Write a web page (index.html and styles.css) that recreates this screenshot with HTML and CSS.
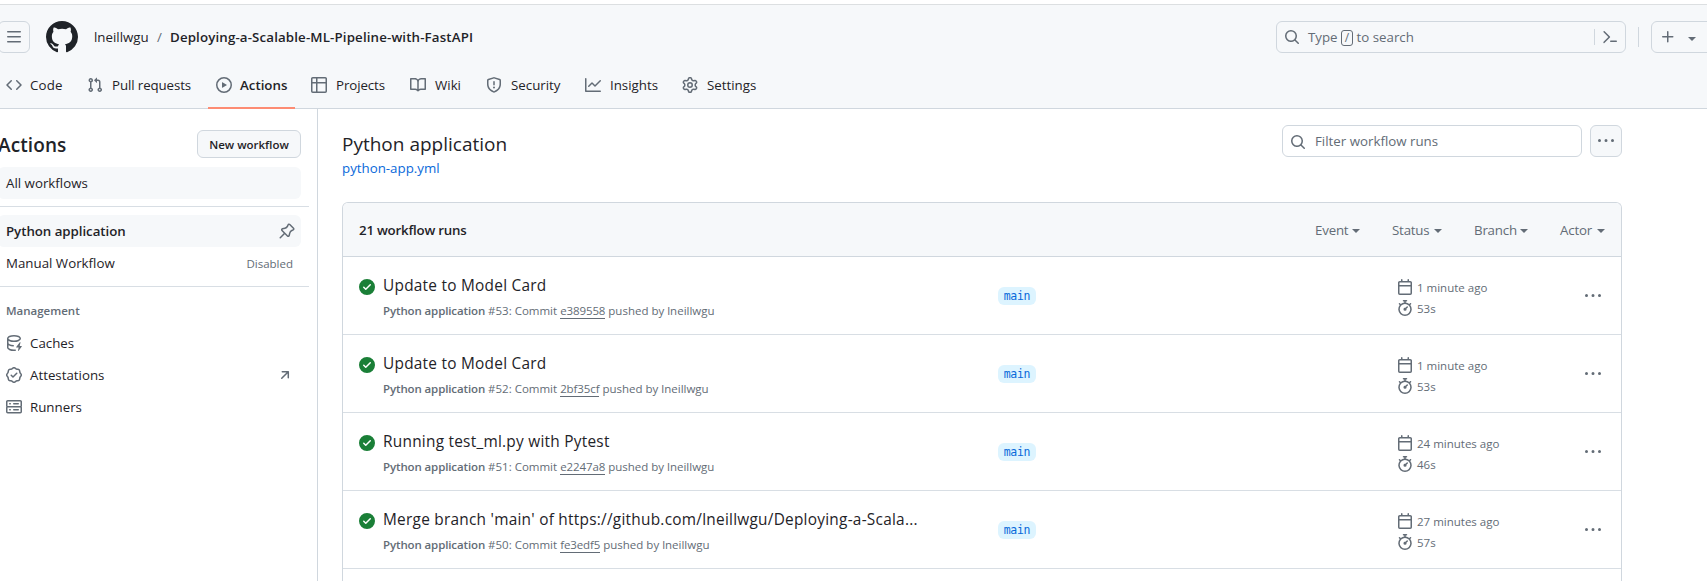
FILE: index.html
```html
<!DOCTYPE html>
<html lang="en">
<head>
<meta charset="utf-8">
<title>Workflow runs</title>
<link rel="stylesheet" href="styles.css">
</head>
<body>
<svg class="sprite" width="0" height="0">
  <symbol id="i-check" viewBox="0 0 16 16"><path d="M8 16A8 8 0 1 1 8 0a8 8 0 0 1 0 16Zm3.78-9.72a.751.751 0 0 0-.018-1.042.751.751 0 0 0-1.042-.018L6.75 9.19 5.28 7.72a.751.751 0 0 0-1.042.018.751.751 0 0 0-.018 1.042l2 2a.75.75 0 0 0 1.06 0Z"/></symbol>
  <symbol id="i-dots" viewBox="0 0 16 16"><path d="M8 9a1.5 1.5 0 1 0 0-3 1.5 1.5 0 0 0 0 3ZM1.5 9a1.5 1.5 0 1 0 0-3 1.5 1.5 0 0 0 0 3Zm13 0a1.5 1.5 0 1 0 0-3 1.5 1.5 0 0 0 0 3Z"/></symbol>
  <symbol id="i-search" viewBox="0 0 16 16"><path d="M10.68 11.74a6 6 0 0 1-7.922-8.982 6 6 0 0 1 8.982 7.922l3.04 3.04a.749.749 0 0 1-.326 1.275.749.749 0 0 1-.734-.215ZM11.5 7a4.499 4.499 0 1 0-8.997 0A4.499 4.499 0 0 0 11.5 7Z"/></symbol>
  <symbol id="i-cal" viewBox="0 0 16 16"><path d="M4.75 0a.75.75 0 0 1 .75.75V2h5V.75a.75.75 0 0 1 1.5 0V2h1.25c.966 0 1.75.784 1.75 1.75v10.5A1.75 1.75 0 0 1 13.25 16H2.75A1.75 1.75 0 0 1 1 14.25V3.75C1 2.784 1.784 2 2.75 2H4V.75A.75.75 0 0 1 4.75 0ZM2.5 7.5v6.75c0 .138.112.25.25.25h10.5a.25.25 0 0 0 .25-.25V7.5Zm10.75-4H2.75a.25.25 0 0 0-.25.25V6h11V3.75a.25.25 0 0 0-.25-.25Z"/></symbol>
  <symbol id="i-watch" viewBox="0 0 16 16"><path d="M5.75.75A.75.75 0 0 1 6.5 0h3a.75.75 0 0 1 0 1.5h-.75v1l-.001.041a6.724 6.724 0 0 1 3.464 1.435l.007-.006.75-.75a.749.749 0 0 1 1.275.326.749.749 0 0 1-.215.734l-.75.75-.006.007a6.75 6.75 0 1 1-10.548 0L2.72 5.03l-.75-.75a.751.751 0 0 1 .018-1.042.751.751 0 0 1 1.042-.018l.75.75.007.006A6.72 6.72 0 0 1 7.25 2.541V1.5H6.5a.75.75 0 0 1-.75-.75ZM8 14.5a5.25 5.25 0 1 0-.001-10.501A5.25 5.25 0 0 0 8 14.5Zm.389-6.7 1.33-1.33a.75.75 0 1 1 1.061 1.06L9.45 8.861A1.503 1.503 0 0 1 8 10.75a1.499 1.499 0 1 1 .389-2.95Z"/></symbol>
</svg>

<div class="topline"></div>
<header class="header">
  <div class="bar">
    <div class="menu"><svg class="ic" viewBox="0 0 16 16"><path d="M1 2.75A.75.75 0 0 1 1.75 2h12.5a.75.75 0 0 1 0 1.5H1.75A.75.75 0 0 1 1 2.75Zm0 5A.75.75 0 0 1 1.75 7h12.5a.75.75 0 0 1 0 1.5H1.75A.75.75 0 0 1 1 7.75ZM1.75 12h12.5a.75.75 0 0 1 0 1.5H1.75a.75.75 0 0 1 0-1.5Z"/></svg></div>
    <svg class="logo" viewBox="0 0 16 16"><path d="M8 0c4.42 0 8 3.58 8 8a8.013 8.013 0 0 1-5.45 7.59c-.4.08-.55-.17-.55-.38 0-.27.01-1.13.01-2.2 0-.75-.25-1.23-.54-1.48 1.78-.2 3.65-.88 3.65-3.95 0-.88-.31-1.59-.82-2.15.08-.2.36-1.02-.08-2.12 0 0-.67-.22-2.2.82-.64-.18-1.32-.27-2-.27-.68 0-1.36.09-2 .27-1.53-1.03-2.2-.82-2.2-.82-.44 1.1-.16 1.92-.08 2.12-.51.56-.82 1.28-.82 2.15 0 3.06 1.86 3.75 3.64 3.95-.23.2-.44.55-.51 1.07-.46.21-1.61.55-2.33-.66-.15-.24-.6-.83-1.23-.82-.67.01-.27.38.01.53.34.19.73.9.82 1.13.16.45.68 1.31 2.69.94 0 .67.01 1.3.01 1.49 0 .21-.15.45-.55.38A7.995 7.995 0 0 1 0 8c0-4.42 3.58-8 8-8Z"/></svg>
    <span class="owner">lneillwgu</span><span class="slash">/</span><span class="repo">Deploying-a-Scalable-ML-Pipeline-with-FastAPI</span>
    <div class="search">
      <svg class="ic"><use href="#i-search"/></svg>
      <span class="search-text">Type <kbd>/</kbd> to search</span>
      <span class="search-sep"></span>
      <svg class="ic term" viewBox="0 0 16 16"><path d="m6.354 8.04-4.773 4.773a.75.75 0 1 0 1.061 1.06L7.945 8.57a.75.75 0 0 0 0-1.06L2.642 2.206a.75.75 0 0 0-1.06 1.061L6.353 8.04ZM8.75 11.5a.75.75 0 0 0 0 1.5h5.5a.75.75 0 0 0 0-1.5h-5.5Z"/></svg>
    </div>
    <span class="divider"></span>
    <div class="create"><svg class="ic" viewBox="0 0 16 16"><path d="M7.75 2a.75.75 0 0 1 .75.75V7h4.25a.75.75 0 0 1 0 1.5H8.5v4.25a.75.75 0 0 1-1.5 0V8.5H2.75a.75.75 0 0 1 0-1.5H7V2.75A.75.75 0 0 1 7.75 2Z"/></svg><i class="caret"></i></div>
  </div>
  <nav class="tabs">
    <a class="tab t1"><svg class="ic" viewBox="0 0 16 16"><path d="m11.28 3.22 4.25 4.25a.75.75 0 0 1 0 1.06l-4.25 4.25a.749.749 0 0 1-1.275-.326.749.749 0 0 1 .215-.734L13.94 8l-3.72-3.72a.749.749 0 0 1 .326-1.275.749.749 0 0 1 .734.215Zm-6.56 0a.751.751 0 0 1 1.042.018.751.751 0 0 1 .018 1.042L2.06 8l3.72 3.72a.749.749 0 0 1-.326 1.275.749.749 0 0 1-.734-.215L.47 8.53a.75.75 0 0 1 0-1.06Z"/></svg><span>Code</span></a>
    <a class="tab t2"><svg class="ic" viewBox="0 0 16 16"><path d="M1.5 3.25a2.25 2.25 0 1 1 3 2.122v5.256a2.251 2.251 0 1 1-1.5 0V5.372A2.25 2.25 0 0 1 1.5 3.25Zm5.677-.177L9.573.677A.25.25 0 0 1 10 .854V2.5h1A2.5 2.5 0 0 1 13.5 5v5.628a2.251 2.251 0 1 1-1.5 0V5a1 1 0 0 0-1-1h-1v1.646a.25.25 0 0 1-.427.177L7.177 3.427a.25.25 0 0 1 0-.354ZM3.75 2.5a.75.75 0 1 0 0 1.5.75.75 0 0 0 0-1.5Zm0 9.5a.75.75 0 1 0 0 1.5.75.75 0 0 0 0-1.5Zm8.25.75a.75.75 0 1 0 1.5 0 .75.75 0 0 0-1.5 0Z"/></svg><span>Pull requests</span></a>
    <a class="tab t3 active"><svg class="ic" viewBox="0 0 16 16"><path d="M8 0a8 8 0 1 1 0 16A8 8 0 0 1 8 0ZM1.5 8a6.5 6.5 0 1 0 13 0 6.5 6.5 0 0 0-13 0Zm4.879-2.773 4.264 2.559a.25.25 0 0 1 0 .428l-4.264 2.559A.25.25 0 0 1 6 10.559V5.442a.25.25 0 0 1 .379-.215Z"/></svg><span>Actions</span></a>
    <a class="tab t4"><svg class="ic" viewBox="0 0 16 16"><path d="M0 1.75C0 .784.784 0 1.75 0h12.5C15.216 0 16 .784 16 1.75v12.5A1.75 1.75 0 0 1 14.25 16H1.75A1.75 1.75 0 0 1 0 14.25ZM6.5 6.5v8h7.75a.25.25 0 0 0 .25-.25V6.5Zm8-1.5V1.75a.25.25 0 0 0-.25-.25H6.5V5Zm-13 1.5v7.75c0 .138.112.25.25.25H5v-8ZM5 5V1.5H1.75a.25.25 0 0 0-.25.25V5Z"/></svg><span>Projects</span></a>
    <a class="tab t5"><svg class="ic" viewBox="0 0 16 16"><path d="M0 1.75A.75.75 0 0 1 .75 1h4.253c1.227 0 2.317.59 3 1.501A3.743 3.743 0 0 1 11.006 1h4.245a.75.75 0 0 1 .75.75v10.5a.75.75 0 0 1-.75.75h-4.507a2.25 2.25 0 0 0-1.591.659l-.622.621a.75.75 0 0 1-1.06 0l-.622-.621A2.25 2.25 0 0 0 5.258 13H.75a.75.75 0 0 1-.75-.75Zm7.251 10.324.004-5.073-.002-2.253A2.25 2.25 0 0 0 5.003 2.5H1.5v9h3.757a3.75 3.75 0 0 1 1.994.574ZM8.755 4.75l-.004 7.322a3.752 3.752 0 0 1 1.992-.572H14.5v-9h-3.495a2.25 2.25 0 0 0-2.25 2.25Z"/></svg><span>Wiki</span></a>
    <a class="tab t6"><svg class="ic" viewBox="0 0 16 16"><path d="M7.467.133a1.748 1.748 0 0 1 1.066 0l5.25 1.68A1.75 1.75 0 0 1 15 3.48V7c0 1.566-.32 3.182-1.303 4.682-.983 1.498-2.585 2.813-5.032 3.855a1.697 1.697 0 0 1-1.33 0c-2.447-1.042-4.049-2.357-5.032-3.855C1.32 10.182 1 8.566 1 7V3.48a1.75 1.75 0 0 1 1.217-1.667Zm.61 1.429a.25.25 0 0 0-.153 0l-5.25 1.68a.25.25 0 0 0-.174.238V7c0 1.358.275 2.666 1.057 3.86.784 1.194 2.121 2.34 4.366 3.297a.196.196 0 0 0 .154 0c2.245-.956 3.582-2.104 4.366-3.298C13.225 9.666 13.5 8.36 13.5 7V3.48a.251.251 0 0 0-.174-.237l-5.25-1.68ZM8.75 4.75v3a.75.75 0 0 1-1.5 0v-3a.75.75 0 0 1 1.5 0ZM9 10.5a1 1 0 1 1-2 0 1 1 0 0 1 2 0Z"/></svg><span>Security</span></a>
    <a class="tab t7"><svg class="ic" viewBox="0 0 16 16"><path d="M1.5 1.75V13.5h13.75a.75.75 0 0 1 0 1.5H.75a.75.75 0 0 1-.75-.75V1.75a.75.75 0 0 1 1.5 0Zm14.28 2.53-5.25 5.25a.75.75 0 0 1-1.06 0L7 7.06 4.28 9.78a.751.751 0 0 1-1.042-.018.751.751 0 0 1-.018-1.042l3.25-3.25a.75.75 0 0 1 1.06 0L10 7.94l4.72-4.72a.751.751 0 0 1 1.042.018.751.751 0 0 1 .018 1.042Z"/></svg><span>Insights</span></a>
    <a class="tab t8"><svg class="ic" viewBox="0 0 16 16"><path d="M8 0a8.2 8.2 0 0 1 .701.031C9.444.095 9.99.645 10.16 1.29l.288 1.107c.018.066.079.158.212.224.231.114.454.243.668.386.123.082.233.09.299.071l1.103-.303c.644-.176 1.392.021 1.82.63.27.385.506.792.704 1.218.315.675.111 1.422-.364 1.891l-.814.806c-.049.048-.098.147-.088.294.016.257.016.515 0 .772-.01.147.038.246.088.294l.814.806c.475.469.679 1.216.364 1.891a7.977 7.977 0 0 1-.704 1.217c-.428.61-1.176.807-1.82.63l-1.102-.302c-.067-.019-.177-.011-.3.071a5.909 5.909 0 0 1-.668.386c-.133.066-.194.158-.211.224l-.29 1.106c-.168.646-.715 1.196-1.458 1.26a8.006 8.006 0 0 1-1.402 0c-.743-.064-1.289-.614-1.458-1.26l-.289-1.106c-.018-.066-.079-.158-.212-.224a5.738 5.738 0 0 1-.668-.386c-.123-.082-.233-.09-.299-.071l-1.103.303c-.644.176-1.392-.021-1.82-.63a8.12 8.12 0 0 1-.704-1.218c-.315-.675-.111-1.422.363-1.891l.815-.806c.05-.048.098-.147.088-.294a6.214 6.214 0 0 1 0-.772c.01-.147-.038-.246-.088-.294l-.815-.806C.635 6.045.431 5.298.746 4.623a7.92 7.92 0 0 1 .704-1.217c.428-.61 1.176-.807 1.82-.63l1.102.302c.067.019.177.011.3-.071.214-.143.437-.272.668-.386.133-.066.194-.158.211-.224l.29-1.106C6.009.645 6.556.095 7.299.03 7.53.01 7.764 0 8 0Zm-.571 1.525c-.036.003-.108.036-.137.146l-.289 1.105c-.147.561-.549.967-.998 1.189-.173.086-.34.183-.5.29-.417.278-.97.423-1.529.27l-1.103-.303c-.109-.03-.175.016-.195.045-.22.312-.412.644-.573.99-.014.031-.021.11.059.19l.815.806c.411.406.562.957.53 1.456a4.709 4.709 0 0 0 0 .582c.032.499-.119 1.05-.53 1.456l-.815.806c-.081.08-.073.159-.059.19.162.346.353.677.573.989.02.03.085.076.195.046l1.102-.303c.56-.153 1.113-.008 1.53.27.161.107.328.204.501.29.447.222.85.629.997 1.189l.289 1.105c.029.109.101.143.137.146a6.6 6.6 0 0 0 1.142 0c.036-.003.108-.036.137-.146l.289-1.105c.147-.561.549-.967.998-1.189.173-.086.34-.183.5-.29.417-.278.97-.423 1.529-.27l1.103.303c.109.029.175-.016.195-.045.22-.313.411-.644.573-.99.014-.031.021-.11-.059-.19l-.815-.806c-.411-.406-.562-.957-.53-1.456a4.709 4.709 0 0 0 0-.582c-.032-.499.119-1.05.53-1.456l.815-.806c.081-.08.073-.159.059-.19a6.464 6.464 0 0 0-.573-.989c-.02-.03-.085-.076-.195-.046l-1.102.303c-.56.153-1.113.008-1.53-.27a4.44 4.44 0 0 0-.501-.29c-.447-.222-.85-.629-.997-1.189l-.289-1.105c-.029-.11-.101-.143-.137-.146a6.6 6.6 0 0 0-1.142 0ZM11 8a3 3 0 1 1-6 0 3 3 0 0 1 6 0ZM9.5 8a1.5 1.5 0 1 0-3.001.001A1.5 1.5 0 0 0 9.5 8Z"/></svg><span>Settings</span></a>
  </nav>
</header>

<div class="page">
  <aside class="side">
    <div class="side-head"><h2>Actions</h2><a class="new">New workflow</a></div>
    <a class="item shaded"><span>All workflows</span></a>
    <hr class="rule r1">
    <a class="item shaded strong"><span>Python application</span><svg class="ic end pin" viewBox="0 0 16 16"><path d="m11.294.984 3.722 3.722a1.75 1.75 0 0 1-.504 2.826l-1.327.613a3.089 3.089 0 0 0-1.707 2.084l-.584 2.454c-.317 1.332-1.972 1.8-2.94.832L5.75 11.311 1.78 15.28a.749.749 0 1 1-1.06-1.06l3.969-3.97-2.204-2.204c-.968-.968-.5-2.623.832-2.94l2.454-.584a3.08 3.08 0 0 0 2.084-1.707l.613-1.327a1.75 1.75 0 0 1 2.826-.504ZM6.283 9.723l2.732 2.731a.25.25 0 0 0 .42-.119l.584-2.454a4.586 4.586 0 0 1 2.537-3.098l1.328-.613a.25.25 0 0 0 .072-.404l-3.722-3.722a.25.25 0 0 0-.404.072l-.613 1.328a4.584 4.584 0 0 1-3.098 2.537l-2.454.584a.25.25 0 0 0-.119.42l2.731 2.732Z"/></svg></a>
    <a class="item"><span>Manual Workflow</span><small class="end">Disabled</small></a>
    <hr class="rule r2">
    <h3>Management</h3>
    <a class="item"><svg class="ic" viewBox="0 0 16 16"><path d="M2.5 5.724V8c0 .248.238.7 1.169 1.159.874.43 2.144.745 3.62.822a.75.75 0 1 1-.078 1.498c-1.622-.085-3.102-.432-4.204-.975a5.565 5.565 0 0 1-.507-.28V12.5c0 .133.058.318.282.551.227.237.591.483 1.101.707 1.015.447 2.47.742 4.117.742.406 0 .802-.018 1.183-.052a.751.751 0 1 1 .134 1.494C8.89 15.98 8.45 16 8 16c-1.805 0-3.475-.32-4.721-.869-.623-.274-1.173-.619-1.579-1.041-.408-.425-.7-.964-.7-1.59v-9c0-.626.292-1.165.7-1.591.406-.42.956-.766 1.579-1.04C4.525.32 6.195 0 8 0c1.806 0 3.476.32 4.721.869.623.274 1.173.619 1.579 1.041.408.425.7.964.7 1.59 0 .626-.292 1.165-.7 1.591-.406.42-.956.766-1.578 1.04C11.475 6.68 9.805 7 8 7c-1.805 0-3.475-.32-4.721-.869a6.15 6.15 0 0 1-.779-.407Zm0-2.224c0 .133.058.318.282.551.227.237.591.483 1.101.707C4.898 5.205 6.353 5.5 8 5.5c1.646 0 3.101-.295 4.118-.742.508-.224.873-.471 1.1-.708.224-.232.282-.417.282-.55 0-.133-.058-.318-.282-.551-.227-.237-.591-.483-1.101-.707C11.102 1.795 9.647 1.5 8 1.5c-1.646 0-3.101.295-4.118.742-.508.224-.873.471-1.1.708-.224.232-.282.417-.282.55Z"/><path d="M14.49 7.582a.375.375 0 0 0-.66-.313l-3.625 4.625a.375.375 0 0 0 .295.606h2.127l-.619 2.922a.375.375 0 0 0 .666.304l3.125-4.125A.375.375 0 0 0 15.5 11h-1.778l.769-3.418Z"/></svg><span>Caches</span></a>
    <a class="item"><svg class="ic" viewBox="0 0 16 16"><path d="m9.585.52.929.68c.153.112.331.186.518.215l1.138.175a2.678 2.678 0 0 1 2.24 2.24l.174 1.139c.029.187.103.365.215.518l.68.928a2.677 2.677 0 0 1 0 3.17l-.68.928a1.174 1.174 0 0 0-.215.518l-.175 1.138a2.678 2.678 0 0 1-2.241 2.241l-1.138.175a1.17 1.17 0 0 0-.518.215l-.928.68a2.677 2.677 0 0 1-3.17 0l-.928-.68a1.174 1.174 0 0 0-.518-.215L3.83 14.41a2.678 2.678 0 0 1-2.24-2.24l-.175-1.138a1.17 1.17 0 0 0-.215-.518l-.68-.928a2.677 2.677 0 0 1 0-3.17l.68-.928c.112-.153.186-.331.215-.518l.175-1.14a2.678 2.678 0 0 1 2.24-2.24l1.139-.175c.187-.029.365-.103.518-.215l.928-.68a2.677 2.677 0 0 1 3.17 0ZM7.303 1.728l-.927.68a2.67 2.67 0 0 1-1.18.489l-1.137.174a1.179 1.179 0 0 0-.987.987l-.174 1.136a2.677 2.677 0 0 1-.489 1.18l-.68.928a1.18 1.18 0 0 0 0 1.394l.68.927c.256.348.424.753.489 1.18l.174 1.137c.078.509.478.909.987.987l1.136.174a2.67 2.67 0 0 1 1.18.489l.928.68c.414.305.979.305 1.394 0l.927-.68a2.67 2.67 0 0 1 1.18-.489l1.137-.174a1.18 1.18 0 0 0 .987-.987l.174-1.136a2.67 2.67 0 0 1 .489-1.18l.68-.928a1.176 1.176 0 0 0 0-1.394l-.68-.927a2.686 2.686 0 0 1-.489-1.18l-.174-1.137a1.179 1.179 0 0 0-.987-.987l-1.136-.174a2.677 2.677 0 0 1-1.18-.489l-.928-.68a1.176 1.176 0 0 0-1.394 0ZM11.28 6.78l-3.75 3.75a.75.75 0 0 1-1.06 0L4.72 8.78a.751.751 0 0 1 .018-1.042.751.751 0 0 1 1.042-.018L7 8.94l3.22-3.22a.751.751 0 0 1 1.042.018.751.751 0 0 1 .018 1.042Z"/></svg><span>Attestations</span><svg class="ic end arrow" viewBox="0 0 16 16"><path d="M4.53 4.75A.75.75 0 0 1 5.28 4h6.01a.75.75 0 0 1 .75.75v6.01a.75.75 0 0 1-1.5 0v-4.2l-5.26 5.261a.749.749 0 0 1-1.275-.326.749.749 0 0 1 .215-.734L9.48 5.5h-4.2a.75.75 0 0 1-.75-.75Z"/></svg></a>
    <a class="item"><svg class="ic" viewBox="0 0 16 16"><path d="M1.75 1h12.5c.966 0 1.75.784 1.75 1.75v4c0 .372-.116.717-.314 1 .198.283.314.628.314 1v4a1.75 1.75 0 0 1-1.75 1.75H1.75A1.75 1.75 0 0 1 0 12.75v-4c0-.358.109-.707.314-1a1.739 1.739 0 0 1-.314-1v-4C0 1.784.784 1 1.75 1ZM1.5 2.75v4c0 .138.112.25.25.25h12.5a.25.25 0 0 0 .25-.25v-4a.25.25 0 0 0-.25-.25H1.75a.25.25 0 0 0-.25.25Zm.25 5.75a.25.25 0 0 0-.25.25v4c0 .138.112.25.25.25h12.5a.25.25 0 0 0 .25-.25v-4a.25.25 0 0 0-.25-.25ZM7 4.75A.75.75 0 0 1 7.75 4h4.5a.75.75 0 0 1 0 1.5h-4.5A.75.75 0 0 1 7 4.75ZM7.75 10h4.5a.75.75 0 0 1 0 1.5h-4.5a.75.75 0 0 1 0-1.5ZM3 4.75A.75.75 0 0 1 3.75 4h.5a.75.75 0 0 1 0 1.5h-.5A.75.75 0 0 1 3 4.75ZM3.75 10h.5a.75.75 0 0 1 0 1.5h-.5a.75.75 0 0 1 0-1.5Z"/></svg><span>Runners</span></a>
  </aside>

  <main class="main">
    <div class="head">
      <div class="titles"><h1>Python application</h1><a class="file">python-app.yml</a></div>
      <div class="filter"><svg class="ic"><use href="#i-search"/></svg><span>Filter workflow runs</span></div>
      <div class="more"><svg class="ic"><use href="#i-dots"/></svg></div>
    </div>
    <section class="box">
      <div class="box-head">
        <strong>21 workflow runs</strong>
        <span class="dd d1">Event<i class="caret"></i></span>
        <span class="dd d2">Status<i class="caret"></i></span>
        <span class="dd d3">Branch<i class="caret"></i></span>
        <span class="dd d4">Actor<i class="caret"></i></span>
      </div>
      <div class="run">
        <svg class="ic ok"><use href="#i-check"/></svg>
        <div class="info"><div class="name">Update to Model Card</div><div class="meta"><b>Python application</b> #53: Commit <u>e389558</u> pushed by lneillwgu</div></div>
        <div class="branch"><span>main</span></div>
        <div class="times"><div><svg class="ic"><use href="#i-cal"/></svg><span>1 minute ago</span></div><div><svg class="ic"><use href="#i-watch"/></svg><span>53s</span></div></div>
        <svg class="ic kebab"><use href="#i-dots"/></svg>
      </div>
      <div class="run">
        <svg class="ic ok"><use href="#i-check"/></svg>
        <div class="info"><div class="name">Update to Model Card</div><div class="meta"><b>Python application</b> #52: Commit <u>2bf35cf</u> pushed by lneillwgu</div></div>
        <div class="branch"><span>main</span></div>
        <div class="times"><div><svg class="ic"><use href="#i-cal"/></svg><span>1 minute ago</span></div><div><svg class="ic"><use href="#i-watch"/></svg><span>53s</span></div></div>
        <svg class="ic kebab"><use href="#i-dots"/></svg>
      </div>
      <div class="run">
        <svg class="ic ok"><use href="#i-check"/></svg>
        <div class="info"><div class="name">Running test_ml.py with Pytest</div><div class="meta"><b>Python application</b> #51: Commit <u>e2247a8</u> pushed by lneillwgu</div></div>
        <div class="branch"><span>main</span></div>
        <div class="times"><div><svg class="ic"><use href="#i-cal"/></svg><span>24 minutes ago</span></div><div><svg class="ic"><use href="#i-watch"/></svg><span>46s</span></div></div>
        <svg class="ic kebab"><use href="#i-dots"/></svg>
      </div>
      <div class="run">
        <svg class="ic ok"><use href="#i-check"/></svg>
        <div class="info"><div class="name">Merge branch 'main' of https://github.com/lneillwgu/Deploying-a-Scala...</div><div class="meta"><b>Python application</b> #50: Commit <u>fe3edf5</u> pushed by lneillwgu</div></div>
        <div class="branch"><span>main</span></div>
        <div class="times"><div><svg class="ic"><use href="#i-cal"/></svg><span>27 minutes ago</span></div><div><svg class="ic"><use href="#i-watch"/></svg><span>57s</span></div></div>
        <svg class="ic kebab"><use href="#i-dots"/></svg>
      </div>
    </section>
  </main>
</div>
</body>
</html>
```

FILE: styles.css
```css
* { box-sizing: border-box; }
body {
  margin: 0;
  width: 1707px;
  height: 581px;
  overflow: hidden;
  background: #fff;
  color: #1f2328;
  font: 13.3px/20px "Open Sans", "Noto Sans", sans-serif;
}
h1, h2, h3 { margin: 0; }
.sprite { display: none; }
.ic { width: 16px; height: 16px; flex: none; fill: #636c76; display: block; }
.caret {
  flex: none;
  border: 4px solid transparent;
  border-top-color: #636c76;
  border-bottom: 0;
  width: 0;
  height: 0;
  margin-top: 3px;
}

.topline { height: 5px; border-bottom: 1px solid #dcdfe1; }
.header { height: 104px; background: #f6f8fa; border-bottom: 1px solid #d0d7de; }
.bar { display: flex; align-items: center; height: 64px; white-space: nowrap; }
.menu {
  width: 32px; height: 32px; margin-left: -2px; margin-right: 16px; flex: none;
  border: 1px solid #d0d7de; border-radius: 6px;
  display: flex; align-items: center; justify-content: center;
}
.logo { width: 32px; height: 32px; flex: none; fill: #1f2328; margin-right: 16px; }
.owner { width: 63px; }
.slash { width: 13px; color: #636c76; }
.repo { font-weight: 600; width: 401px; letter-spacing: 0.14px; }
.search {
  margin-left: 705px; width: 350px; height: 32px; flex: none;
  border: 1px solid #d0d7de; border-radius: 6px;
  display: flex; align-items: center; padding: 0 7px; color: #636c76;
}
.owner, .slash, .repo { flex: none; }
.search-text { margin-left: 8px; flex: 1; }
kbd {
  font: inherit; font-size: 12px; line-height: 14px; display: inline-block;
  width: 12px; text-align: center; border: 1px solid #636c76; border-radius: 3px;
}
.search-sep { width: 1px; height: 16px; background: #d0d7de; margin-right: 7px; }
.divider { width: 1px; height: 20px; background: #d0d7de; margin: 0 12px; flex: none; }
.create {
  width: 64px; height: 32px; flex: none; border: 1px solid #d0d7de; border-radius: 6px;
  display: flex; align-items: center; padding-left: 8px; gap: 12px;
}

.tabs { display: flex; gap: 8px; height: 40px; margin-left: -2px; }
.tab { display: flex; align-items: center; gap: 8px; padding: 0 8px; height: 32px; white-space: nowrap; flex: none; }
.t1 { width: 73px; letter-spacing: 0.2px; }
.t2 { width: 121px; gap: 9px; letter-spacing: -0.1px; }
.t3 { width: 87px; }
.t4 { width: 91px; gap: 9px; letter-spacing: -0.1px; }
.t5 { width: 68px; gap: 9px; }
.t6 { width: 91px; gap: 9px; }
.t7 { width: 89px; gap: 9px; }
.t8 { gap: 9px; }
.active { height: 40px; padding-bottom: 6px; border-bottom: 2px solid #fd8c73; font-weight: 600; }

.page { display: flex; height: 472px; }
.side { width: 318px; flex: none; border-right: 1px solid #d0d7de; padding: 21px 8px 0 0; }
.side-head { display: flex; justify-content: space-between; align-items: center; height: 28px; padding-right: 8px; margin-bottom: 9px; }
.side h2 { font-size: 19px; font-weight: 600; margin-left: -2px; padding-top: 2px; letter-spacing: 0.1px; }
.new {
  width: 104px; height: 28px; border: 1px solid #d0d7de; border-radius: 6px; background: #f6f8fa;
  font-size: 11.5px; font-weight: 600; line-height: 28px; text-align: center; white-space: nowrap;
}
.item { display: flex; align-items: center; height: 32px; margin-right: 8px; margin-left: -2px; padding: 0 8px; gap: 8px; border-radius: 6px; }
.shaded { background: #f6f8fa; }
.strong { font-weight: 600; letter-spacing: -0.05px; }
.end { margin-left: auto; }
small { font-size: 11.5px; line-height: 18px; padding-top: 1px; color: #636c76; }
.pin { margin-right: -2px; }
.rule { border: 0; height: 1px; background: #d8dee4; margin: 7px 0 8px; }
.side h3 { font-size: 11.5px; font-weight: 600; line-height: 18px; color: #636c76; padding: 7px 6px; }

.main { width: 1304px; padding: 16px 0 0 24px; flex: none; }
.head { display: flex; height: 77px; }
.titles { flex: 1; }
.main h1 { font-size: 19px; font-weight: 400; line-height: 30px; padding-top: 4px; }
.file { color: #0969da; display: block; line-height: 18px; }
.filter {
  width: 300px; height: 32px; border: 1px solid #d0d7de; border-radius: 6px; color: #636c76;
  display: flex; align-items: center; gap: 9px; padding-left: 7px;
}
.filter .ic { margin-top: 2px; }
.more {
  width: 32px; height: 32px; margin-left: 8px; border: 1px solid #d0d7de; border-radius: 6px;
  background: #f6f8fa; display: flex; align-items: center; justify-content: center;
}
.box { border: 1px solid #d0d7de; border-bottom: 0; border-radius: 6px 6px 0 0; height: 400px; }
.box-head {
  height: 54px; background: #f6f8fa; border-bottom: 1px solid #d0d7de; border-radius: 5px 5px 0 0;
  display: flex; align-items: center; padding: 0 16px; color: #636c76;
}
.box-head strong { flex: 1; font-weight: 600; color: #1f2328; letter-spacing: -0.22px; }
.dd { display: flex; align-items: center; justify-content: space-between; margin-left: 32px; letter-spacing: -0.2px; }
.d1 { width: 45px; }
.d2 { width: 50px; }
.d3 { width: 54px; }
.d4 { width: 45px; }
.run { display: flex; height: 78px; border-bottom: 1px solid #d8dee4; padding: 0 20px 0 16px; white-space: nowrap; }
.ok { fill: #1a7f37; margin-top: 22px; }
.info { width: 615px; margin-left: 8px; padding-top: 17px; flex: none; }
.name { font-size: 15.4px; line-height: 24px; font-weight: 500; letter-spacing: 0.25px; }
.meta { font-size: 11.5px; line-height: 18px; color: #636c76; margin-top: 4px; }
.meta b { font-weight: 600; letter-spacing: -0.12px; }
.meta u { text-decoration: none; border-bottom: 1px solid #636c76; letter-spacing: -0.1px; }
.branch { width: 399px; padding-top: 30px; flex: none; }
.branch span {
  display: block; width: 38px; height: 18px; border-radius: 6px; background: #ddf4ff; color: #0969da;
  font: 11.5px/18px "DejaVu Sans Mono", monospace; letter-spacing: -0.3px; text-align: center;
}
.times { padding-top: 19.5px; font-size: 11.5px; color: #636c76; flex: 1; }
.times div { display: flex; align-items: center; gap: 4px; height: 21px; }
.times span { padding-top: 1px; }
.kebab { margin-top: 31px; }
```
